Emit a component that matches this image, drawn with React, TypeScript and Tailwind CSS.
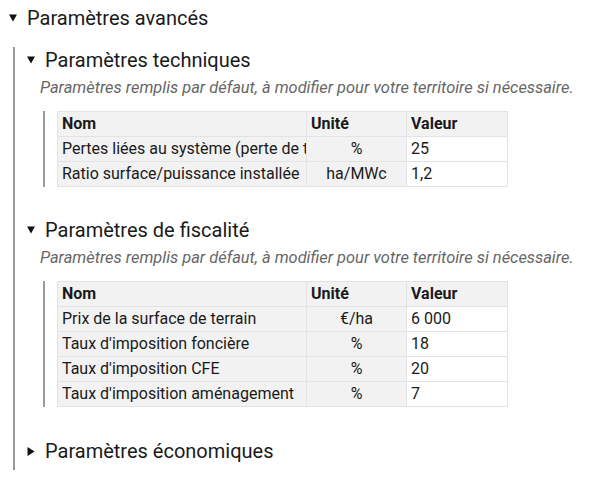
import React from "react";

function Down() {
  return (
    <svg width="8" height="8" viewBox="0 0 8 8" className="shrink-0">
      <polygon points="0,0.5 8,0.5 4,7.5" fill="#111" />
    </svg>
  );
}
function Right() {
  return (
    <svg width="8" height="9" viewBox="0 0 8 9" className="shrink-0">
      <polygon points="0.5,0 7.5,4.5 0.5,9" fill="#111" />
    </svg>
  );
}

type Row = [string, string, string];

function Table({ rows }: { rows: Row[] }) {
  return (
    <div className="ml-[16px] border-l-2 border-[#999] pl-[12px]">
      <table className="table-fixed w-[450px] border-collapse text-[16px] leading-[24px]">
        <colgroup>
          <col className="w-[249px]" />
          <col className="w-[100px]" />
          <col className="w-[101px]" />
        </colgroup>
        <thead>
          <tr className="bg-[#f2f2f2]">
            <th className="border border-[#e3e3e3] px-[4px] text-left font-bold">Nom</th>
            <th className="border border-[#e3e3e3] px-[4px] text-left font-bold">Unité</th>
            <th className="border border-[#e3e3e3] px-[4px] text-left font-bold">Valeur</th>
          </tr>
        </thead>
        <tbody>
          {rows.map((r, i) => (
            <tr key={i}>
              <td className="border border-[#e3e3e3] bg-[#f2f2f2] pl-[4px] pr-0">
                <div className="whitespace-nowrap overflow-hidden">{r[0]}</div>
              </td>
              <td className="border border-[#e3e3e3] bg-[#f2f2f2] px-[4px] text-center">{r[1]}</td>
              <td className="border border-[#e3e3e3] bg-white px-[4px]">{r[2]}</td>
            </tr>
          ))}
        </tbody>
      </table>
    </div>
  );
}

function Sub({ title, rows }: { title: string; rows: Row[] }) {
  return (
    <div>
      <div className="flex items-center gap-[10px] h-[24px] text-[20px]">
        <Down />
        <span>{title}</span>
      </div>
      <p className="mt-[6px] ml-[13px] text-[16.4px] leading-[20px] italic text-[#666]">
        Paramètres remplis par défaut, à modifier pour votre territoire si nécessaire.
      </p>
      <div className="mt-[13px]">
        <Table rows={rows} />
      </div>
    </div>
  );
}

export default function App() {
  return (
    <div className="font-['Roboto',sans-serif] text-[#1a1a1a] bg-white w-[595px] h-[481px]">
      <div className="pt-[6px] pl-[9px] flex items-center gap-[10px] h-[30px] text-[20px]">
        <Down />
        <span>Paramètres avancés</span>
      </div>
      <div className="mt-[17px] ml-[13px] border-l-2 border-[#999] pl-[12px] pt-[1px] pb-[7px] flex flex-col">
        <Sub
          title="Paramètres techniques"
          rows={[
            ["Pertes liées au système (perte de transformation)", "%", "25"],
            ["Ratio surface/puissance installée", "ha/MWc", "1,2"],
          ]}
        />
        <div className="mt-[31px]">
          <Sub
            title="Paramètres de fiscalité"
            rows={[
              ["Prix de la surface de terrain", "€/ha", "6 000"],
              ["Taux d'imposition foncière", "%", "18"],
              ["Taux d'imposition CFE", "%", "20"],
              ["Taux d'imposition aménagement", "%", "7"],
            ]}
          />
        </div>
        <div className="mt-[32px] flex items-center gap-[10px] h-[24px] text-[20px]">
          <Right />
          <span>Paramètres économiques</span>
        </div>
      </div>
    </div>
  );
}
